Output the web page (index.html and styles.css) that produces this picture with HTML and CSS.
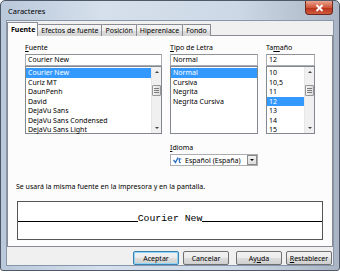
FILE: index.html
```
<!DOCTYPE html>
<html lang="es">
<head>
    <meta charset="UTF-8">
    <meta name="viewport" content="width=device-width, initial-scale=1.0">
    <title>Caracteres</title>
    <link rel="stylesheet" href="styles.css">
</head>
<body>
    <div class="window">
        <div class="titlebar">
            <span class="title">Caracteres</span>
            <div class="close">
                <svg width="9" height="8" viewBox="0 0 9 8"><path d="M1.5 1 L7.5 7 M7.5 1 L1.5 7" stroke="#fff" stroke-width="1.8"/></svg>
            </div>
        </div>
        <div class="client">
            <div class="tabs">
                <div class="tab active">Fuente</div>
                <div class="tab">Efectos de fuente</div>
                <div class="tab">Posición</div>
                <div class="tab">Hiperenlace</div>
                <div class="tab">Fondo</div>
            </div>
            <div class="panel">
                <div class="pickers">
                    <div class="field">
                        <label><u>F</u>uente</label>
                        <div class="input">Courier New</div>
                        <div class="list">
                            <div class="items">
                                <div class="item selected">Courier New</div>
                                <div class="item">Curlz MT</div>
                                <div class="item">DaunPenh</div>
                                <div class="item">David</div>
                                <div class="item">DejaVu Sans</div>
                                <div class="item">DejaVu Sans Condensed</div>
                                <div class="item">DejaVu Sans Light</div>
                            </div>
                            <div class="scrollbar">
                                <div class="arrow up"></div>
                                <div class="track top"></div>
                                <div class="thumb"><i></i><i></i><i></i></div>
                                <div class="track bottom"></div>
                                <div class="arrow down"></div>
                            </div>
                        </div>
                    </div>
                    <div class="field">
                        <label><u>T</u>ipo de Letra</label>
                        <div class="input">Normal</div>
                        <div class="list">
                            <div class="items">
                                <div class="item selected">Normal</div>
                                <div class="item">Cursiva</div>
                                <div class="item">Negrita</div>
                                <div class="item">Negrita Cursiva</div>
                            </div>
                        </div>
                    </div>
                    <div class="field">
                        <label>Ta<u>m</u>año</label>
                        <div class="input">12</div>
                        <div class="list">
                            <div class="items">
                                <div class="item">10</div>
                                <div class="item">10,5</div>
                                <div class="item">11</div>
                                <div class="item selected">12</div>
                                <div class="item">13</div>
                                <div class="item">14</div>
                                <div class="item">15</div>
                            </div>
                            <div class="scrollbar">
                                <div class="arrow up"></div>
                                <div class="track top"></div>
                                <div class="thumb"><i></i><i></i><i></i></div>
                                <div class="track bottom"></div>
                                <div class="arrow down"></div>
                            </div>
                        </div>
                    </div>
                    <div class="field lang">
                        <label><u>I</u>dioma</label>
                        <div class="combo">
                            <svg class="lang-icon" width="9" height="8" viewBox="0 0 9 8">
                                <path d="M0.5 4 L2.5 6.5 L5 1.5" stroke="#2d6fc4" stroke-width="1.3" fill="none"/>
                                <path d="M5 3 H8.5 M6.5 2 V7 M5.5 5 L8 7" stroke="#2d6fc4" stroke-width="0.9" fill="none"/>
                            </svg>
                            <span class="combo-text">Español (España)</span>
                            <div class="combo-btn"><span class="arrow down"></span></div>
                        </div>
                    </div>
                </div>
                <p class="note">Se usará la misma fuente en la impresora y en la pantalla.</p>
                <div class="preview">
                    <div class="rule"></div>
                    <span class="sample">Courier New</span>
                    <div class="rule"></div>
                </div>
            </div>
            <div class="buttons">
                <button class="default">Aceptar</button>
                <button>Cancelar</button>
                <button class="help">Ay<u>u</u>da</button>
                <button><u>R</u>establecer</button>
            </div>
        </div>
    </div>
</body>
</html>
```
FILE: styles.css
```
* {
    box-sizing: border-box;
}
body {
    margin: 0;
    background: #fff;
    font-family: 'Noto Sans', sans-serif;
    font-size: 7px;
    color: #000;
}
.window {
    width: 340px;
    height: 271px;
    border: 1px solid #4f5866;
    border-radius: 5px 5px 3px 3px;
    background: linear-gradient(to right, #b9c8da, #d6e0ec 30%, #cdd8e6 70%, #a9b5c4);
    padding: 0 5px 4px;
    display: flex;
    flex-direction: column;
}
.titlebar {
    height: 19px;
    display: flex;
    justify-content: space-between;
    align-items: flex-start;
}
.title {
    padding: 5px 0 0 2px;
    font-size: 7.5px;
}
.close {
    width: 28px;
    height: 14px;
    margin-right: 1px;
    border: 1px solid #6e2a1e;
    border-top: none;
    border-radius: 0 0 4px 4px;
    background: linear-gradient(#eaa58f, #d0553a 50%, #b7301a 51%, #cf5a3c);
    display: flex;
    justify-content: center;
    align-items: center;
}
.client {
    flex: 1;
    background: #f0f0f0;
    border: 1px solid #8795a8;
    padding-top: 1px;
    display: flex;
    flex-direction: column;
}
.tabs {
    display: flex;
    height: 14px;
    align-items: flex-end;
    margin-bottom: -1px;
    position: relative;
    z-index: 1;
}
.tab {
    height: 12px;
    line-height: 11px;
    padding: 0 3px;
    border: 1px solid #898c95;
    border-bottom: none;
    border-left: none;
    background: linear-gradient(#f5f5f5, #ececec 50%, #dedede 51%, #d3d3d3);
    border-radius: 1px 1px 0 0;
}
.tab.active {
    height: 14px;
    line-height: 13px;
    border-left: 1px solid #898c95;
    background: #fcfcfc;
    font-weight: bold;
    padding: 0 2px 0 3px;
}
.panel {
    height: 212px;
    background: #fcfcfc;
    border: 1px solid #898c95;
    padding: 7px 9px 0;
}
.pickers {
    display: grid;
    grid-template-columns: 137px 88px 49px;
    column-gap: 8px;
    margin: 0 8px;
}
.field label {
    display: block;
    height: 9px;
    line-height: 9px;
    margin-bottom: 2px;
}
.input {
    height: 12px;
    line-height: 10px;
    padding-left: 2px;
    border: 1px solid #abadb3;
    border-top-color: #8e9196;
    background: #fff;
}
.list {
    height: 68px;
    border: 1px solid #828790;
    background: #fff;
    display: flex;
}
.items {
    flex: 1;
    padding-top: 1px;
}
.item {
    height: 9.5px;
    line-height: 9.5px;
    padding-left: 2px;
    white-space: nowrap;
    overflow: hidden;
}
.item.selected {
    background: #3399ff;
    color: #fff;
}
.scrollbar {
    width: 10px;
    background: #f0f0f0;
    border-left: 1px solid #e6e6e6;
    display: flex;
    flex-direction: column;
    align-items: center;
}
.scrollbar .arrow {
    flex: none;
    height: 10px;
    width: 10px;
}
.arrow.up {
    background: linear-gradient(to bottom right, transparent 50%, transparent 50%);
    position: relative;
}
.arrow.up::after, .arrow.down::after {
    content: '';
    position: absolute;
    left: 3px;
    border-left: 2px solid transparent;
    border-right: 2px solid transparent;
}
.arrow.up::after {
    top: 4px;
    border-bottom: 2px solid #404040;
}
.arrow.down {
    position: relative;
}
.arrow.down::after {
    top: 4px;
    border-top: 2px solid #404040;
}
.track.top {
    flex: 1;
}
.track.bottom {
    flex: 3.5;
}
.thumb {
    width: 9px;
    height: 11px;
    border: 1px solid #979797;
    border-radius: 1px;
    background: linear-gradient(to right, #f4f4f4, #dcdcdc);
    display: flex;
    flex-direction: column;
    justify-content: center;
    align-items: center;
    gap: 1px;
}
.thumb i {
    display: block;
    width: 5px;
    height: 1px;
    background: #7a7a7a;
}
.lang {
    grid-column: 2 / 4;
    margin-top: 9px;
}
.combo {
    width: 88px;
    height: 12px;
    border: 1px solid #abadb3;
    background: #fff;
    display: flex;
    align-items: center;
}
.lang-icon {
    margin: 0 3px 0 2px;
}
.combo-text {
    flex: 1;
}
.combo-btn {
    width: 10px;
    height: 10px;
    margin-right: 0;
    border: 1px solid #8a8a8a;
    background: linear-gradient(#f2f2f2, #dcdcdc);
    position: relative;
}
.combo-btn .arrow.down {
    position: absolute;
    left: 0;
    top: 0;
}
.combo-btn .arrow.down::after {
    left: 2px;
    top: 3px;
    border-left-width: 2.5px;
    border-right-width: 2.5px;
    border-top-width: 2.5px;
    border-top-color: #000;
}
.note {
    margin: 16px 0 0 -1px;
    line-height: 9px;
}
.preview {
    height: 39px;
    margin-top: 10px;
    border: 1px solid #555;
    background: #fff;
    display: flex;
    align-items: flex-end;
    padding-bottom: 15px;
}
.rule {
    flex: 1;
    border-bottom: 1px solid #000;
    margin-bottom: 2px;
}
.sample {
    font-family: 'Liberation Mono', monospace;
    font-size: 9.8px;
    line-height: 10px;
}
.buttons {
    display: flex;
    justify-content: flex-end;
    gap: 4px;
    margin-top: 4px;
    padding-right: 1px;
}
.buttons button {
    width: 46px;
    height: 14px;
    padding: 0;
    font-family: 'Noto Sans', sans-serif;
    font-size: 7px;
    color: #000;
    border: 1px solid #707070;
    border-radius: 2px;
    background: linear-gradient(#f2f2f2, #ebebeb 50%, #dddddd 51%, #cfcfcf);
}
.buttons button.default {
    border-color: #3c7fb1;
    box-shadow: inset 0 0 0 1px #8fd6f5;
}
.buttons button.help {
    margin-left: 3px;
}
```
